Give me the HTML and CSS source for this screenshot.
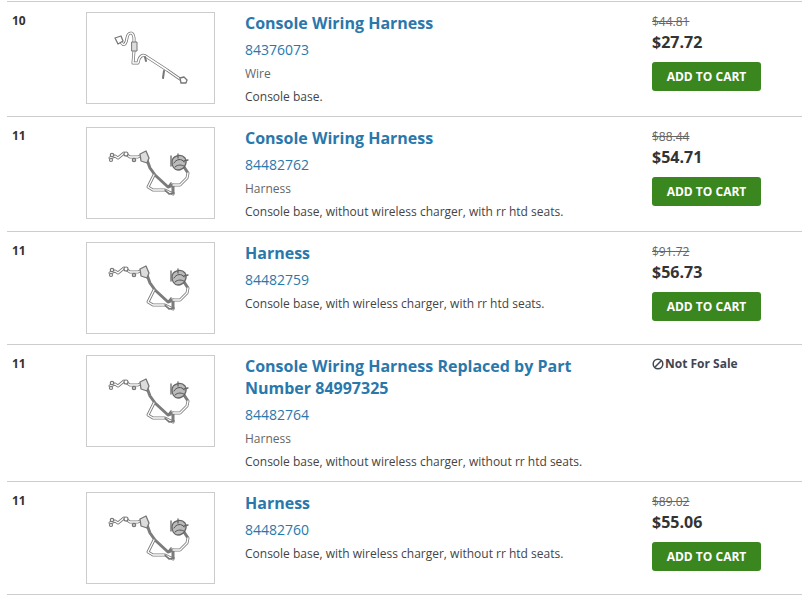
FILE: index.html
```html
<!DOCTYPE html>
<html lang="en">
<head>
<meta charset="utf-8">
<title>Parts</title>
<link rel="stylesheet" href="styles.css">
</head>
<body>
<svg class="defs" width="0" height="0" aria-hidden="true">
  <defs>
    <filter id="soft" x="-5%" y="-5%" width="110%" height="110%"><feGaussianBlur stdDeviation="0.35"/></filter>
    <symbol id="wire" viewBox="87 13 127 90">
      <g filter="url(#soft)" fill="none" stroke-linecap="round" stroke-linejoin="round">
        <path d="M121 42C124 47 126 44 127 38C128 32 133 31 134 38L134 51L133 63L138 63C139 57 142 53 147 57L167 70L180 79" stroke="#777" stroke-width="3"/>
        <path d="M121 42C124 47 126 44 127 38C128 32 133 31 134 38L134 51L133 63L138 63C139 57 142 53 147 57L167 70L180 79" stroke="#fff" stroke-width="1.5"/>
        <path d="M145 57L146 61M164 71L163 78" stroke="#777" stroke-width="2"/>
        <path d="M115 38L121 36L123 41L118 44Z" fill="#fff" stroke="#777" stroke-width="1.3"/>
        <path d="M132 42H137V51H132Z" fill="#ddd" stroke="#777" stroke-width="1"/>
        <path d="M180 78L184 77L187 80L186 83L181 83Z" fill="#fff" stroke="#777" stroke-width="1.3"/>
      </g>
    </symbol>
    <symbol id="harness" viewBox="87 128 127 90">
      <g filter="url(#soft)" fill="none" stroke-linecap="round" stroke-linejoin="round">
        <g stroke="#7c7c7c" stroke-width="3">
          <path d="M110 158L115 156L118 158L124 153L130 157L138 157L142 155"/>
          <path d="M147 160L150 168L155 175L168 187L173 185L180 185L187 178L188 173L184 167"/>
          <path d="M154 175L148 187L153 190L165 190L173 194L173 185"/>
        </g>
        <g stroke="#fff" stroke-width="1.3">
          <path d="M110 158L115 156L118 158L124 153L130 157L138 157L142 155"/>
          <path d="M173 185L180 185L187 178L188 173"/>
          <path d="M154 175L148 187L153 190L165 190L173 194"/>
        </g>
        <circle cx="112" cy="155" r="1.7" fill="#fff" stroke="#777" stroke-width="1.2"/>
        <circle cx="111" cy="160" r="1.5" fill="#fff" stroke="#777" stroke-width="1.2"/>
        <circle cx="126" cy="154" r="2" fill="#fff" stroke="#777" stroke-width="1.2"/>
        <circle cx="134" cy="160" r="1.7" fill="#ccc" stroke="#777" stroke-width="1.2"/>
        <path d="M140 154L146 151L149 158L147 163L141 161Z" fill="#ddd" stroke="#777" stroke-width="1.3"/>
        <path d="M172 162C172 156 181 153 185 158C188 163 184 170 178 170C174 170 172 166 172 162Z" fill="#bbb" stroke="#666" stroke-width="1.3"/>
        <path d="M174 163C176 159 182 158 184 162M175 167C178 164 182 165 184 166" stroke="#555" stroke-width="1"/>
        <path d="M171 156V166M178 154V158M184 161L188 160" stroke="#666" stroke-width="1.3"/>
        <path d="M168 187L171 183M165 190L169 194L174 193" stroke="#777" stroke-width="1.6"/>
      </g>
    </symbol>
  </defs>
</svg>
<main class="parts">
  <article class="row">
    <div class="num">10</div>
    <div class="thumb"><svg class="pic"><use href="#wire"/></svg></div>
    <div class="info">
      <h3 class="title">Console Wiring Harness</h3>
      <div class="sku">84376073</div>
      <div class="kind">Wire</div>
      <div class="desc">Console base.</div>
    </div>
    <div class="buy">
      <div class="was">$44.81</div>
      <div class="now">$27.72</div>
      <button class="cart">ADD TO CART</button>
    </div>
  </article>
  <article class="row">
    <div class="num">11</div>
    <div class="thumb"><svg class="pic"><use href="#harness"/></svg></div>
    <div class="info">
      <h3 class="title">Console Wiring Harness</h3>
      <div class="sku">84482762</div>
      <div class="kind">Harness</div>
      <div class="desc">Console base, without wireless charger, with rr htd seats.</div>
    </div>
    <div class="buy">
      <div class="was">$88.44</div>
      <div class="now">$54.71</div>
      <button class="cart">ADD TO CART</button>
    </div>
  </article>
  <article class="row">
    <div class="num">11</div>
    <div class="thumb"><svg class="pic"><use href="#harness"/></svg></div>
    <div class="info">
      <h3 class="title">Harness</h3>
      <div class="sku">84482759</div>
      <div class="desc">Console base, with wireless charger, with rr htd seats.</div>
    </div>
    <div class="buy">
      <div class="was">$91.72</div>
      <div class="now">$56.73</div>
      <button class="cart">ADD TO CART</button>
    </div>
  </article>
  <article class="row">
    <div class="num">11</div>
    <div class="thumb"><svg class="pic"><use href="#harness"/></svg></div>
    <div class="info">
      <h3 class="title">Console Wiring Harness Replaced by Part Number 84997325</h3>
      <div class="sku">84482764</div>
      <div class="kind">Harness</div>
      <div class="desc">Console base, without wireless charger, without rr htd seats.</div>
    </div>
    <div class="buy">
      <div class="nfs">
        <svg class="ban" viewBox="0 0 12 12"><circle cx="6" cy="6" r="4.8"/><path d="M2.8 9.2L9.2 2.8"/></svg>
        <span>Not For Sale</span>
      </div>
    </div>
  </article>
  <article class="row">
    <div class="num">11</div>
    <div class="thumb"><svg class="pic"><use href="#harness"/></svg></div>
    <div class="info">
      <h3 class="title">Harness</h3>
      <div class="sku">84482760</div>
      <div class="desc">Console base, with wireless charger, without rr htd seats.</div>
    </div>
    <div class="buy">
      <div class="was">$89.02</div>
      <div class="now">$55.06</div>
      <button class="cart">ADD TO CART</button>
    </div>
  </article>
</main>
</body>
</html>
```
FILE: styles.css
```css
* { box-sizing: border-box; }
html, body { margin: 0; background: #fff; }
body {
  padding-top: 1px;
  font-family: "Open Sans", "Liberation Sans", sans-serif;
  color: #333;
  overflow: hidden;
}
.defs { display: block; height: 0; }
.parts {
  margin-left: 7px;
  border-bottom: 1px solid #ccc;
}
.row {
  display: grid;
  grid-template-columns: 79px 159px 407px 150px;
  padding: 10px 0;
  border-top: 1px solid #ccc;
}
.num {
  padding-left: 5px;
  font-size: 12px;
  font-weight: 700;
  line-height: 18px;
}
.thumb {
  width: 129px;
  height: 92px;
  border: 1px solid #ccc;
}
.pic { display: block; width: 127px; height: 90px; }
.info { padding-right: 60px; }
.title {
  margin: 0;
  font-size: 16px;
  font-weight: 700;
  line-height: 22px;
  color: #2a78ab;
}
.sku {
  margin-top: 6px;
  font-size: 14px;
  line-height: 20px;
  color: #2a78ab;
}
.kind {
  margin-top: 4px;
  font-size: 12px;
  line-height: 19px;
  color: #666;
}
.desc {
  margin-top: 4px;
  font-size: 12px;
  line-height: 19px;
  color: #444;
}
.was {
  font-size: 12px;
  line-height: 20px;
  color: #666;
  text-decoration: line-through;
}
.now {
  font-size: 16px;
  font-weight: 700;
  line-height: 20px;
  color: #333;
}
.cart {
  display: block;
  width: 109px;
  height: 29px;
  margin-top: 10px;
  padding: 0;
  border: 0;
  border-radius: 3px;
  background: #3a861f;
  color: #fff;
  font: 700 12px/29px "Open Sans", "Liberation Sans", sans-serif;
}
.nfs {
  display: flex;
  align-items: center;
  gap: 1px;
  font-size: 12px;
  font-weight: 700;
  line-height: 18px;
  color: #3f4650;
}
.ban { width: 12px; height: 12px; fill: none; stroke: #3f4650; stroke-width: 1.5; }
```
